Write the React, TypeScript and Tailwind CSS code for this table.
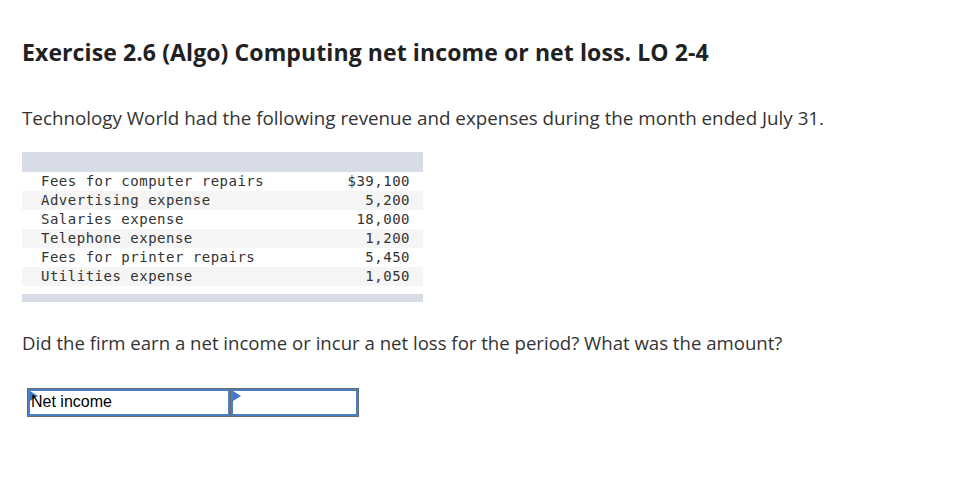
import React from "react";

const rows: [string, string][] = [
  ["Fees for computer repairs", "$39,100"],
  ["Advertising expense", "5,200"],
  ["Salaries expense", "18,000"],
  ["Telephone expense", "1,200"],
  ["Fees for printer repairs", "5,450"],
  ["Utilities expense", "1,050"],
];

function Marker() {
  return (
    <svg className="absolute left-0 top-0" width="8" height="10" viewBox="0 0 8 10">
      <polygon points="0,0 8,5 0,10" fill="#3f78c4" />
    </svg>
  );
}

export default function App() {
  return (
    <div className="w-[968px] h-[483px] bg-white pl-[22px] pt-[38px] text-[#222]" style={{ fontFamily: "'Open Sans', sans-serif" }}>
      <h1 className="text-[23px] font-bold leading-[28px] tracking-[0.1px] text-[#212121]">
        Exercise 2.6 (Algo) Computing net income or net loss. LO 2-4
      </h1>
      <p className="mt-[40px] text-[18.8px] leading-[24px] text-[#333]">
        Technology World had the following revenue and expenses during the month ended July 31.
      </p>
      <div className="mt-[22px] w-[401px]" style={{ fontFamily: "'DejaVu Sans Mono', monospace" }}>
        <div className="h-[20px] bg-[#d8dce6]" />
        {rows.map(([label, val], i) => (
          <div
            key={label}
            className={`flex h-[19px] items-center justify-between pl-[19px] pr-[13px] text-[14px] tracking-[0.5px] text-[#333] ${i % 2 === 1 ? "bg-[#f5f5f5]" : "bg-white"}`}
          >
            <span>{label}</span>
            <span>{val}</span>
          </div>
        ))}
        <div className="mt-[8px] h-[8px] bg-[#d8dce6]" />
      </div>
      <p className="mt-[29px] text-[18.6px] leading-[24px] text-[#333]">
        Did the firm earn a net income or incur a net loss for the period? What was the amount?
      </p>
      <div className="ml-[5px] mt-[33px] flex h-[29px] w-[332px] border border-[#6b6b6b] bg-[#6b6b6b] gap-[1px]">
        <div className="relative w-[202px] border-2 border-[#4a7fc3] bg-white">
          <Marker />
          <span className="absolute left-[1px] top-[1px] text-[16px] leading-[20px] text-black" style={{ fontFamily: "'Liberation Sans', Arial, sans-serif" }}>
            Net income
          </span>
        </div>
        <div className="relative flex-1 border-2 border-[#4a7fc3] bg-white">
          <Marker />
        </div>
      </div>
    </div>
  );
}
